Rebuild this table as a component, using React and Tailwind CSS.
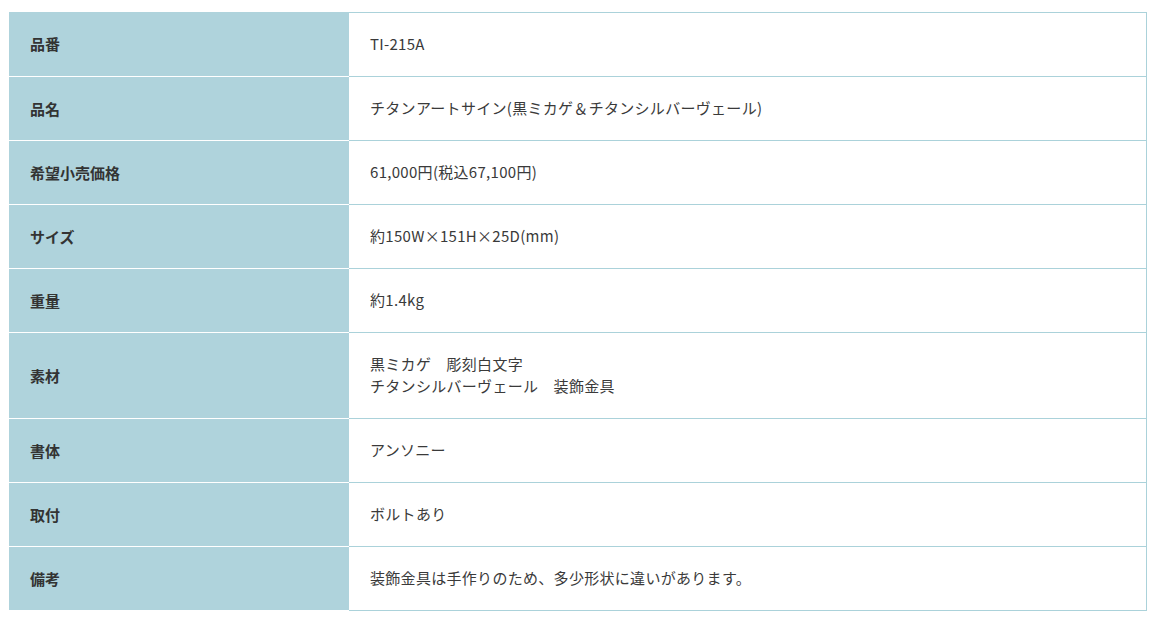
const rows = [
  { label: '品番', value: ['TI-215A'] },
  { label: '品名', value: ['チタンアートサイン(黒ミカゲ＆チタンシルバーヴェール)'] },
  { label: '希望小売価格', value: ['61,000円(税込67,100円)'] },
  { label: 'サイズ', value: ['約150W×151H×25D(mm)'] },
  { label: '重量', value: ['約1.4kg'] },
  { label: '素材', value: ['黒ミカゲ　彫刻白文字', 'チタンシルバーヴェール　装飾金具'] },
  { label: '書体', value: ['アンソニー'] },
  { label: '取付', value: ['ボルトあり'] },
  { label: '備考', value: ['装飾金具は手作りのため、多少形状に違いがあります。'] },
];

const SpecRow = ({ label, value, first }) => (
  <div className="flex">
    <div className="w-[340px] shrink-0 bg-[#afd3dc] border-b border-white flex items-center px-[21px] py-[20px] text-[15px] font-bold text-[#333] leading-[23px]">
      {label}
    </div>
    <div
      className={`flex-1 border-b border-r border-[#abd2da] px-[21px] py-[20px] text-[15px] text-[#3a3a3a] leading-[22.5px] tracking-[0.02em] flex flex-col justify-center ${first ? 'border-t' : ''}`}
    >
      {value.map((v) => (
        <span key={v}>{v}</span>
      ))}
    </div>
  </div>
);

export default function App() {
  return (
    <div
      className="w-[1153px] h-[620px] bg-white pl-[9px] pt-[12px]"
      style={{ fontFamily: '"Noto Sans CJK JP", "Noto Sans", sans-serif' }}
    >
      <div className="w-[1138px] flex flex-col">
        {rows.map((r, i) => (
          <SpecRow key={r.label} label={r.label} value={r.value} first={i === 0} />
        ))}
      </div>
    </div>
  );
}
